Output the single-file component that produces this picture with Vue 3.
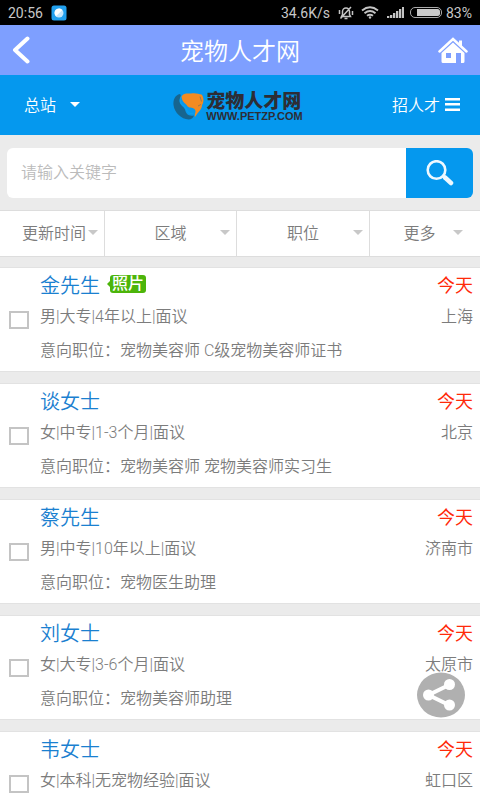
<script setup>
import { ref } from 'vue'

const keyword = ref('')
const filters = ['更新时间', '区域', '职位', '更多']
const people = ref([
  { name: '金先生', photo: true, info: '男|大专|4年以上|面议', city: '上海', job: '宠物美容师 C级宠物美容师证书', checked: false },
  { name: '谈女士', photo: false, info: '女|中专|1-3个月|面议', city: '北京', job: '宠物美容师 宠物美容师实习生', checked: false },
  { name: '蔡先生', photo: false, info: '男|中专|10年以上|面议', city: '济南市', job: '宠物医生助理', checked: false },
  { name: '刘女士', photo: false, info: '女|大专|3-6个月|面议', city: '太原市', job: '宠物美容师助理', checked: false },
  { name: '韦女士', photo: false, info: '女|本科|无宠物经验|面议', city: '虹口区', job: '', checked: false },
])
</script>

<template>
  <div class="app">
    <div class="status">
      <span>20:56</span>
      <svg class="status-app" width="16" height="16" viewBox="0 0 16 16" aria-hidden="true">
        <rect x="0.5" y="0.5" width="15" height="15" rx="2.5" fill="#22a0ee" />
        <circle cx="8" cy="8" r="4.5" fill="#c5e6fb" />
        <path d="M3.6 8.6A4.5 4.5 0 0 1 11.4 5L5 11.2a4.4 4.4 0 0 1-1.400-2.600z" fill="#fff" />
      </svg>
      <span class="speed">34.6K/s</span>
      <svg class="mute" width="16" height="14" viewBox="0 0 16 14" fill="none" stroke="#c4c4c4" stroke-width="1.500" aria-hidden="true">
        <path d="M4 10.500h8.500L11.500 8.500V5.500a3.500 3.500 0 0 0-7 0v3L3.500 10.500zM6.500 12.500h3M2.500 12.500L13 1M1.500 4v4M14.500 5v4" />
      </svg>
      <svg class="wifi" width="18" height="13" viewBox="0 0 18 13" fill="none" stroke="#c4c4c4" stroke-width="1.900" aria-hidden="true">
        <path d="M1 4.500Q9-2 17 4.500M3.500 7.300Q9 2.800 14.500 7.300M6 9.800Q9 7.500 12 9.800" />
        <circle cx="9" cy="11.500" r="1.200" fill="#c4c4c4" stroke="none" />
      </svg>
      <svg class="signal" width="17" height="11" viewBox="0 0 17 11" fill="#c4c4c4" aria-hidden="true">
        <path d="M0 9h2.300v2H0zM3 8h2.300v3H3zM6 6h2.300v5H6zM9 4h2.300v7H9zM12 2h2.300v9H12zM15 0h2v11h-2z" />
      </svg>
      <svg class="battery" width="32" height="11" viewBox="0 0 32 11" aria-hidden="true">
        <rect x="0.500" y="0.500" width="31" height="10" rx="4.500" fill="none" stroke="#aaa" />
        <path d="M7 2h20.500a2.500 2.500 0 0 1 2.500 2.500v2A2.500 2.500 0 0 1 27.500 9H7z" fill="#cacaca" />
      </svg>
      <span>83%</span>
    </div>

    <header class="title-bar">
      <button class="icon-button" type="button" aria-label="返回">
        <svg width="18" height="28" viewBox="0 0 18 28" fill="none" stroke="#fff" stroke-width="4" stroke-linecap="round" stroke-linejoin="round">
          <path d="M15.500 2.500L3 14l12.500 11.500" />
        </svg>
      </button>
      <h1>宠物人才网</h1>
      <button class="icon-button" type="button" aria-label="首页">
        <svg width="30" height="27" viewBox="0 0 30 27">
          <path d="M1.500 14.500L15 2l13.500 12.500" fill="none" stroke="#fff" stroke-width="2.500" stroke-linecap="round" />
          <path d="M21 3.500h3v7l-3-3z" fill="#fff" />
          <path fill-rule="evenodd" d="M15 5.500L26.500 16v8.500a1.500 1.500 0 0 1-1.500 1.500h-2V16h-5v10H5a1.500 1.500 0 0 1-1.500-1.500V16zM8 16v5h5v-5z" fill="#fff" />
        </svg>
      </button>
    </header>

    <nav class="site-bar">
      <button class="site-link" type="button">总站<span class="caret caret-white"></span></button>
      <a class="logo" href="#">
        <svg width="31" height="27" viewBox="0 0 31 27" aria-hidden="true">
          <path d="M7 1C2 2 0 7 0.500 12c1 8 8 14 15 14.500 3 0 5-2 5.500-4-6 1-8-2-9-6-1-3-5-4-5.500-8C6 5 9 3 7 1z" fill="#17658f" />
          <path d="M9 3c-3 3-2 8 2 10 3 2 2 5 5 7 1.500 1 4.500 0 4.500 0" fill="none" stroke="#0ba0ee" stroke-width="1.200" />
          <path d="M8.500 3.500C11-.5 15 1 18 .5c4-1 8 .5 10.500 1C31 4 31 9 29 12c0 4-3 6-5 9l-2 3c-1-3 2-5-.5-8-2-2-6-.5-7.500-3.500C12 10 9 9 8.500 3.500z" fill="#f28b22" />
          <path d="M27 3.500l1.500 5M25 13l3-1.500" fill="none" stroke="#7d7560" stroke-width="0.800" />
        </svg>
        <span class="logo-words">
          <span class="logo-name">宠物人才网</span>
          <span class="logo-url">WWW.PETZP.COM</span>
        </span>
      </a>
      <button class="site-link site-menu" type="button">招人才
        <svg width="15" height="13" viewBox="0 0 15 13" fill="#fff" aria-hidden="true">
          <path d="M0 0h15v2.500H0zM0 5h15v2.500H0zM0 10.500h15V13H0z" />
        </svg>
      </button>
    </nav>

    <form class="search" @submit.prevent>
      <input v-model="keyword" type="text" placeholder="请输入关键字" aria-label="请输入关键字" />
      <button type="submit" aria-label="搜索">
        <svg width="28" height="26" viewBox="0 0 28 26" fill="none" stroke="#eef8ff" aria-hidden="true">
          <circle cx="10.500" cy="10" r="8.800" stroke-width="2.600" />
          <path d="M17 16l2 2" stroke-width="2.500" />
          <path d="M19 17.500l6 5.500" stroke-width="4.500" stroke-linecap="round" />
        </svg>
      </button>
    </form>

    <div class="filters">
      <button v-for="f in filters" :key="f" type="button"><span>{{ f }}</span><span class="caret"></span></button>
    </div>

    <main class="list">
      <label v-for="p in people" :key="p.name" class="card">
        <input v-model="p.checked" type="checkbox" />
        <span class="body">
          <span class="row top">
            <span class="name">{{ p.name }}</span>
            <span v-if="p.photo" class="photo">照片</span>
            <span class="date">今天</span>
          </span>
          <span class="row info"><span>{{ p.info }}</span><span>{{ p.city }}</span></span>
          <span class="row job"><span v-if="p.job">意向职位：{{ p.job }}</span></span>
        </span>
      </label>
    </main>

    <button class="share" type="button" aria-label="分享">
      <svg width="48" height="46" viewBox="0 0 48 46">
        <ellipse cx="24" cy="23" rx="24" ry="22.500" fill="#b0b0b0" />
        <path d="M33 12.500L11.500 23 33 33.500" fill="none" stroke="#fff" stroke-width="4" />
        <circle cx="32.500" cy="12.500" r="5.500" fill="#fff" />
        <circle cx="11.500" cy="23" r="5.500" fill="#fff" />
        <circle cx="32.500" cy="33" r="5.500" fill="#fff" />
      </svg>
    </button>
  </div>
</template>

<style>
body {
  margin: 0;
  background: #ebebeb;
}
</style>

<style scoped>
.app {
  display: flex;
  flex-direction: column;
  height: 100vh;
  font-family: Roboto, "Noto Sans CJK SC", sans-serif;
  font-size: 16px;
  font-weight: 350;
  color: #7c7c7c;
}
button {
  padding: 0;
  border: 0;
  background: none;
  color: inherit;
  font: inherit;
  cursor: pointer;
}
svg {
  display: block;
  flex: none;
}
.status {
  display: flex;
  flex: none;
  align-items: center;
  height: 25px;
  padding: 0 8px;
  background: #000;
  color: #c8c8c8;
  font-size: 14px;
  font-weight: 400;
}
.status-app {
  margin-left: 8px;
}
.speed {
  margin-left: auto;
}
.mute {
  margin: 0 7px 0 8px;
}
.signal {
  margin: 0 6px 0 8px;
}
.battery {
  margin-right: 4px;
}
.title-bar {
  display: flex;
  flex: none;
  align-items: center;
  justify-content: space-between;
  height: 50px;
  padding: 0 12px;
  background: #7e9fff;
  color: #fff;
}
.icon-button {
  display: flex;
  width: 30px;
}
h1 {
  margin: 0;
  padding-bottom: 2px;
  font-size: 24px;
  font-weight: 350;
}
.site-bar {
  display: grid;
  grid-template-columns: 1fr auto 1fr;
  flex: none;
  align-items: center;
  height: 58px;
  padding: 0 20px 2px 24px;
  background: #0598ee;
  color: #fff;
}
.site-link {
  display: flex;
  align-items: center;
  gap: 14px;
}
.site-menu {
  gap: 5px;
  justify-self: end;
}
.caret {
  width: 0;
  height: 0;
  border: 5px solid transparent;
  border-top-color: #c8c8c8;
  border-bottom: 0;
}
.caret-white {
  border-top-color: #fff;
}
.logo {
  display: flex;
  align-items: center;
  gap: 2px;
  padding: 4px 8px 0 0;
  color: #2d2d35;
  text-decoration: none;
}
.logo-words {
  display: flex;
  flex-direction: column;
  padding-top: 2px;
}
.logo-name {
  font-size: 19px;
  font-weight: 900;
  line-height: 18px;
}
.logo-url {
  font-family: "Liberation Sans", sans-serif;
  font-size: 11px;
  font-weight: 700;
  line-height: 10px;
}
.search {
  display: flex;
  flex: none;
  height: 50px;
  margin: 13px 7px 12px;
  overflow: hidden;
  border-radius: 6px;
}
.search input {
  flex: 1;
  min-width: 0;
  padding: 0 14px 2px;
  border: 0;
  outline: 0;
  background: #fff;
  color: #555;
  font: inherit;
}
.search input::placeholder {
  color: #bbb;
}
.search button {
  display: flex;
  align-items: center;
  justify-content: center;
  width: 67px;
  background: #0598ee;
}
.filters {
  display: grid;
  grid-template-columns: 105px 132px 133px 1fr;
  flex: none;
  height: 45px;
  border: solid #ddd;
  border-width: 1px 0;
  background: #fff;
}
.filters button {
  display: grid;
  grid-template-columns: 1fr auto;
  align-items: center;
  padding: 0 6px 3px 16px;
  border-right: 1px solid #ddd;
}
.filters button:first-child {
  padding-left: 20px;
}
.filters button:last-child {
  padding-right: 17px;
  border-right: 0;
}
.list {
  display: flex;
  flex: 1;
  flex-direction: column;
  gap: 11px;
  min-height: 0;
  padding-top: 10px;
  overflow-y: auto;
  scrollbar-width: none;
}
.card {
  display: flex;
  flex: none;
  align-items: center;
  gap: 11px;
  padding: 0 7px 3px 9px;
  border: solid #e2e2e2;
  border-width: 1px 0;
  background: #fff;
}
.card input {
  width: 20px;
  height: 18px;
  margin: 4px 0 0;
  border: 2px solid #c4c4c4;
  background: #fff;
  appearance: none;
}
.card input:checked {
  background: #0598ee;
}
.body {
  flex: 1;
}
.row {
  display: flex;
  align-items: center;
}
.top {
  height: 32px;
}
.info {
  justify-content: space-between;
  height: 30px;
}
.job {
  height: 38px;
}
.name {
  color: #1a80d0;
  font-size: 20px;
}
.photo {
  position: relative;
  margin-left: 10px;
  padding: 0 2px;
  border-radius: 3px;
  background: #4cb50a;
  color: #fff;
  font-size: 16px;
  font-weight: 500;
  line-height: 18px;
}
.photo::before {
  position: absolute;
  top: 5px;
  left: -3px;
  border: 4px solid transparent;
  border-right-color: #4cb50a;
  border-left: 0;
  content: "";
}
.date {
  margin-left: auto;
  color: #ff2a0a;
  font-size: 18px;
  font-weight: 400;
}
.share {
  position: fixed;
  right: 15px;
  bottom: 82px;
}
</style>
